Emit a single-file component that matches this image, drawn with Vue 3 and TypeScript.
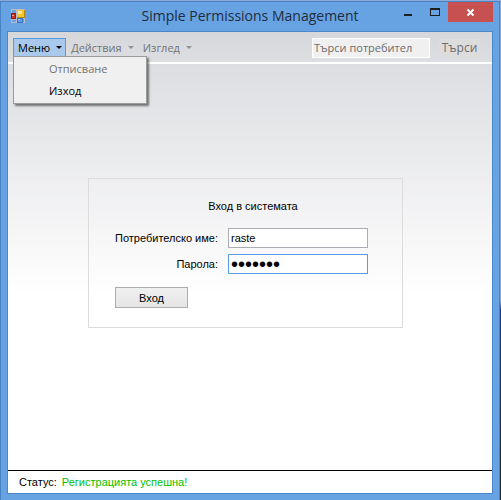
<script setup lang="ts">
import { ref } from 'vue'

interface MenuEntry {
  label: string
  open: boolean
  enabled: boolean
}

const menus: MenuEntry[] = [
  { label: 'Меню', open: true, enabled: true },
  { label: 'Действия', open: false, enabled: false },
  { label: 'Изглед', open: false, enabled: false },
]

const username = ref('raste')
const password = ref('1234567')
const status = ref('Регистрацията успешна!')
</script>

<template>
  <div class="desktop">
    <div class="window">
      <header class="titlebar">
        <svg class="app-icon" width="14" height="14" viewBox="0 0 14 14" shape-rendering="crispEdges" aria-hidden="true">
          <rect width="14" height="14" fill="#bdbcc6" />
          <path d="M1 1h4v3H1zM1 11h4v2H1zM12 10h1v3h-1z" fill="#67a3e3" />
          <rect x="0" y="4" width="5" height="6" fill="#9c1616" />
          <rect x="1" y="5" width="3" height="4" fill="#c83a26" />
          <rect x="1" y="6" width="2" height="1" fill="#f0a090" />
          <rect x="6" y="1" width="8" height="8" fill="#b8860b" />
          <rect x="6" y="1" width="7" height="7" fill="#f6c52c" />
          <rect x="7" y="2" width="4" height="3" fill="#ffe996" />
          <rect x="6" y="9" width="6" height="5" fill="#2f6fc8" />
          <rect x="7" y="10" width="4" height="3" fill="#5ea2f0" />
          <rect x="7" y="10" width="2" height="1" fill="#a9d0fb" />
        </svg>
        <h1>Simple Permissions Management</h1>
        <div class="caption">
          <button type="button" class="cap" aria-label="Minimize">
            <svg width="28" height="20" viewBox="0 0 28 20" shape-rendering="crispEdges"><path d="M12 12h8v2h-8z" fill="#1e1e1e" /></svg>
          </button>
          <button type="button" class="cap" aria-label="Maximize">
            <svg width="28" height="20" viewBox="0 0 28 20" shape-rendering="crispEdges"><path d="M10 6h10v8H10zM11 8v5h8V8z" fill="#1e1e1e" fill-rule="evenodd" /></svg>
          </button>
          <button type="button" class="cap close" aria-label="Close">
            <svg width="45" height="20" viewBox="0 0 45 20"><path d="M19.500 7.500l6 6M25.500 7.500l-6 6" stroke="#fff" stroke-width="2" fill="none" /></svg>
          </button>
        </div>
      </header>

      <div class="client">
        <div class="strip">
          <nav class="menus">
            <div v-for="menu in menus" :key="menu.label" class="menu">
              <button type="button" class="menu-button" :class="{ open: menu.open }" :disabled="!menu.enabled">
                {{ menu.label }}
                <svg width="6" height="3" viewBox="0 0 6 3" aria-hidden="true"><path d="M0 0h6L3 3z" fill="currentColor" /></svg>
              </button>
              <div v-if="menu.open" class="dropdown">
                <button type="button" class="item" disabled>Отписване</button>
                <button type="button" class="item">Изход</button>
              </div>
            </div>
          </nav>
          <input class="search" type="text" value="Търси потребител" aria-label="Търси потребител" disabled />
          <button type="button" class="find" disabled>Търси</button>
        </div>

        <main class="content">
          <form class="panel" @submit.prevent>
            <h2>Вход в системата</h2>
            <div class="fields">
              <label for="username">Потребителско име:</label>
              <input id="username" v-model="username" type="text" />
              <label for="password">Парола:</label>
              <input id="password" v-model="password" class="active" type="password" />
            </div>
            <button type="submit" class="login">Вход</button>
          </form>
        </main>

        <footer class="status">
          <span>Статус:</span>
          <span class="ok">{{ status }}</span>
        </footer>
      </div>
    </div>
  </div>
</template>

<style>
body {
  margin: 0;
}
</style>

<style scoped>
* {
  box-sizing: border-box;
}

button,
input {
  font: inherit;
  color: inherit;
  margin: 0;
  border-radius: 0;
}

.desktop {
  min-height: 100vh;
  display: flex;
  padding: 1px 1px 0 0;
  background: linear-gradient(#8fa9d4 60%, #1f3f80 62%, #2c2820 92%);
  font: 11px/16px "Open Sans", "Noto Sans", sans-serif;
  color: #000;
}

.window {
  flex: 1;
  display: flex;
  flex-direction: column;
  padding: 0 6px 6px;
  border: 1px solid #4583c4;
  border-bottom: 0;
  background: #67a3e3;
}

.titlebar {
  display: grid;
  grid-template-columns: 101px 1fr 101px;
  height: 29px;
}

.app-icon {
  margin: 7px 0 0 4px;
}

h1 {
  margin: 0;
  font-size: 14px;
  line-height: 28px;
  font-weight: 400;
  text-align: center;
  white-space: nowrap;
  color: #1f2c3c;
}

.caption {
  display: flex;
  height: 20px;
}

.cap {
  display: flex;
  padding: 0;
  border: 0;
  background: transparent;
}

.close {
  background: #c75050;
}

.client {
  flex: 1;
  display: flex;
  flex-direction: column;
  border: 1px solid #4b88c9;
  background: linear-gradient(#d8d9dd, #fff 264px);
}

.strip {
  display: flex;
  align-items: flex-start;
  height: 32px;
  padding: 6px 12px 0 5px;
  border-bottom: 2px solid #fff;
  background: linear-gradient(#d6d7db, #dddee2);
}

.menus {
  flex: 1;
  display: flex;
}

.menu {
  position: relative;
}

.menu-button {
  display: flex;
  align-items: center;
  gap: 6px;
  height: 19px;
  padding: 0 3px 0 4px;
  border: 1px solid transparent;
  background: transparent;
}

.menu-button.open {
  border-color: #559be3;
  border-bottom-color: transparent;
  background: #a8c9ec;
}

.menu-button:disabled,
.item:disabled {
  color: #737373;
}

.menu-button:disabled svg {
  color: #929292;
}

.dropdown {
  position: absolute;
  top: 18px;
  left: 0;
  z-index: 1;
  display: flex;
  flex-direction: column;
  width: 134px;
  padding: 1px;
  border: 1px solid #999;
  background: #f0f0f0;
  box-shadow: 2px 2px 2px rgba(0, 0, 0, 0.5);
}

.item {
  height: 22px;
  padding: 0 0 0 34px;
  border: 0;
  background: transparent;
  text-align: left;
}

.search {
  width: 118px;
  height: 20px;
  padding: 0 1px 2px;
  border: 1px solid #fff;
  background: #f0f0f0;
  color: #6d6d6d;
}

.find {
  width: 41px;
  height: 18px;
  margin: 1px 0 0 9px;
  padding: 0;
  border: 0;
  background: #dcdcdc;
  color: #6d6d6d;
  font-size: 12px;
}

.content {
  flex: 1;
  display: flex;
  align-items: center;
  justify-content: center;
  padding: 0 9px 28px 0;
  font: 11px/14px "Liberation Sans", sans-serif;
}

.panel {
  width: 315px;
  padding: 20px 34px 19px 25px;
  border: 1px solid #dcdcdc;
}

h2 {
  margin: 0 0 15px 24px;
  font-size: 11px;
  line-height: 14px;
  font-weight: 400;
  text-align: center;
}

.fields {
  display: grid;
  grid-template-columns: 1fr 140px;
  gap: 6px 10px;
  align-items: center;
}

.fields label {
  text-align: right;
  white-space: nowrap;
}

.fields input {
  width: 100%;
  height: 20px;
  padding: 0 2px;
  border: 1px solid #abadb3;
  background: #fff;
  outline: none;
}

.fields .active {
  border-color: #569de5;
  font-size: 20px;
}

.login {
  display: block;
  width: 73px;
  height: 21px;
  margin: 13px 0 0 1px;
  padding: 0;
  border: 1px solid #acacac;
  background: linear-gradient(#f0f0f0, #e5e5e5);
}

.status {
  display: flex;
  gap: 5px;
  padding: 4px 11px;
  border-top: 1px solid #000;
  background: #fff;
  font: 11px/14px "Liberation Sans", sans-serif;
}

.ok {
  color: #00c000;
}
</style>
